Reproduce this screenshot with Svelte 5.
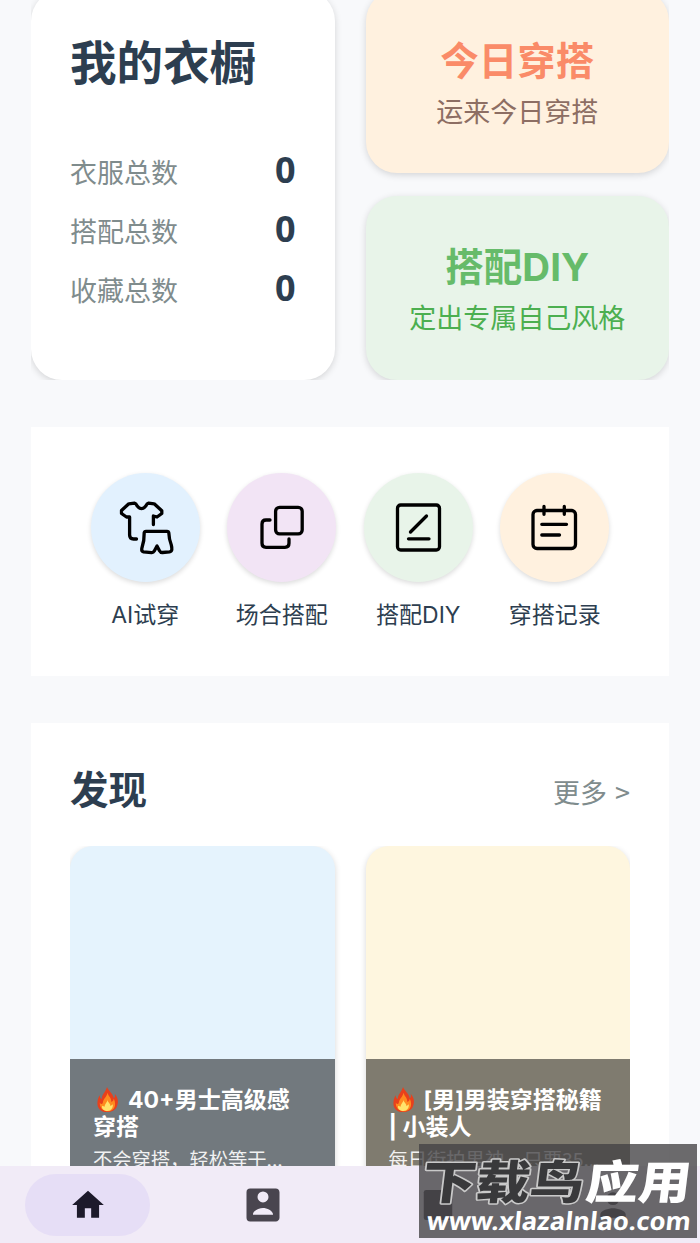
<script>
  const stats = [
    { label: '衣服总数', value: 0 },
    { label: '搭配总数', value: 0 },
    { label: '收藏总数', value: 0 }
  ];

  const actions = [
    { label: 'AI试穿', icon: 'tryon', tone: 'blue' },
    { label: '场合搭配', icon: 'scene', tone: 'purple' },
    { label: '搭配DIY', icon: 'diy', tone: 'green' },
    { label: '穿搭记录', icon: 'record', tone: 'orange' }
  ];

  const articles = [
    { lines: ['40+男士高级感', '穿搭'], desc: '不会穿搭，轻松等于...', tone: 'sky' },
    { lines: ['[男]男装穿搭秘籍', '| 小装人'], desc: '每日街拍男神，只要35...', tone: 'cream' }
  ];

  const tabs = ['home', 'contact', 'box', 'person'];
  let activeTab = $state('home');
</script>

<div class="app">
  <main>
    <section class="overview">
      <div class="card wardrobe">
        <h1>我的衣橱</h1>
        {#each stats as stat}
          <div class="stat">
            <span class="stat-label">{stat.label}</span>
            <span class="stat-value">{stat.value}</span>
          </div>
        {/each}
      </div>
      <div class="side">
        <div class="card promo today">
          <h2>今日穿搭</h2>
          <p>运来今日穿搭</p>
        </div>
        <div class="card promo diy">
          <h2>搭配DIY</h2>
          <p>定出专属自己风格</p>
        </div>
      </div>
    </section>

    <section class="actions">
      {#each actions as action}
        <div class="action">
          <div class="circle {action.tone}">
            <svg viewBox="0 0 109 109" fill="none" stroke="#000" stroke-width="3.3" stroke-linecap="round" stroke-linejoin="round">
              {#if action.icon === 'tryon'}
                <path d="M38.600 44V62Q38.600 66 42.500 66H45.500M38.600 44L35.500 44L30.500 40.500V37.500L37.800 30.800L43.500 30.200Q45.200 30.500 46 32.800Q50.500 38.500 55 32.800Q55.800 30.500 57.500 30.200L63.200 30.800L70.800 37.800V40.500L66 44L62.400 43V51.500" />
                <path d="M53.200 59.800Q53.400 58.300 55 58.300H76Q77.600 58.300 77.800 59.800Q78 66 80.300 72Q81 74.500 80.800 76.800Q80.500 78.600 78.500 78.900L71.500 79.500Q69.500 79.600 68.500 77.700L66 73L63.300 78Q62.300 79.800 60.500 79.600L52.500 78.800Q50.300 78.300 50.800 75.500Q53.500 67 53.200 59.800Z" />
              {:else if action.icon === 'scene'}
                <rect x="48.6" y="34.3" width="26.6" height="26.6" rx="4" />
                <path d="M43 47H39Q35 47 35 51V70.3Q35 74.3 39 74.3H58Q62 74.3 62 70.3V66" />
              {:else if action.icon === 'diy'}
                <rect x="33.5" y="32" width="42" height="45" rx="3.2" />
                <path d="M46.5 59L62.5 43M44.5 65.8H65" />
              {:else}
                <rect x="33" y="37.5" width="42.5" height="38" rx="4" />
                <path d="M44 33.5V41.3M64.3 33.5V41.3M41.8 51.3H66.5M41.8 62H59.5" />
              {/if}
            </svg>
          </div>
          <span>{action.label}</span>
        </div>
      {/each}
    </section>

    <section class="discover">
      <div class="discover-header">
        <h2>发现</h2>
        <span class="more">更多 &gt;</span>
      </div>
      <div class="articles">
        {#each articles as article}
          <div class="article {article.tone}">
            <div class="caption">
              <h3>
                <svg class="fire" viewBox="0 0 24 26">
                  <path fill="#e8401c" d="M11.5 0C13 4 18 7 18.6 12C20 11 20 8.500 19.500 7C23 11 24 16 21.500 21C19 25.500 14 26 11 26C5 26 1 22 1.500 16C1.700 12.500 3 10 4 8.500C4 10.500 4.500 12 6 12.500C6 8 9.500 6 11.500 0Z" />
                  <path fill="#ff8a1f" d="M12 6C13 10 16 11 16 15.500C18 15 18.500 13.500 18.500 12C21 17 20.500 23 15 25C9 26.500 3.500 22.500 4 16C5 18 6 18 7 17C7.500 12 11 11 12 6Z" />
                  <path fill="#ffe36b" d="M12 13C12 16.500 15.500 17 15 20L17.500 18C18 22 15.500 25 12 25C8 25 5.500 22.500 6.500 19.500L9 20.500C9 17.500 12 16 12 13Z" />
                </svg>{article.lines[0]}<br />{article.lines[1]}
              </h3>
              <p>{article.desc}</p>
            </div>
          </div>
        {/each}
      </div>
    </section>
  </main>

  <nav>
    {#each tabs as tab}
      <button class:active={activeTab === tab} aria-label={tab} onclick={() => (activeTab = tab)}>
        {#if tab === 'home'}
          <svg width="38" height="38" viewBox="0 0 24 24"><path d="M10 20v-6h4v6h5v-8h3L12 3 2 12h3v8z" /></svg>
        {:else if tab === 'contact'}
          <svg width="44" height="44" viewBox="0 0 24 24"><path d="M3 5v14a2 2 0 0 0 2 2h14c1.100 0 2-.9 2-2V5c0-1.100-.9-2-2-2H5a2 2 0 0 0-2 2zm12 2.600a3 3 0 1 1-6 0 3 3 0 0 1 6 0zM6.500 17.300c0-2.300 3.500-3.700 5.500-3.700s5.500 1.400 5.500 3.700z" /></svg>
        {:else if tab === 'box'}
          <svg width="38" height="38" viewBox="0 0 24 24"><rect x="3" y="2.500" width="18" height="19" rx="1.500" /></svg>
        {:else}
          <svg width="38" height="38" viewBox="0 0 24 24"><circle cx="12" cy="8" r="4" /><path d="M4 20v-2c0-2.700 5.300-4 8-4s8 1.300 8 4v2z" /></svg>
        {/if}
      </button>
    {/each}
  </nav>

  <div class="watermark">
    <svg viewBox="0 0 278 94">
      <g class="brand" transform="translate(7 0) skewX(-7)">
        <text class="brand-dark" x="1" y="55" textLength="162" lengthAdjust="spacingAndGlyphs">下载鸟</text>
        <text class="brand-light" x="165" y="55" textLength="105" lengthAdjust="spacingAndGlyphs">应用</text>
      </g>
      <g transform="translate(9 0) skewX(-6)">
        <text class="site" x="7" y="86" textLength="264" lengthAdjust="spacingAndGlyphs">www.xlazalnlao.com</text>
      </g>
    </svg>
  </div>
</div>

<style>
  :global(body) {
    background: #f8f9fb;
  }

  .app {
    position: relative;
    display: flex;
    flex-direction: column;
    height: 1243px;
    overflow: hidden;
    background: #f8f9fb;
    color: #2d3e50;
    font-family: 'Noto Sans CJK SC', 'Noto Sans', sans-serif;
  }

  h1, h2, h3, p {
    margin: 0;
  }

  main {
    flex: 1;
    min-height: 0;
    overflow: hidden;
    padding: 0 31px;
  }

  .overview {
    display: grid;
    grid-template-columns: 1fr 1fr;
    gap: 31px;
    height: 390px;
    margin-top: -10.500px;
    overflow: hidden;
  }

  .card {
    border-radius: 31px;
    box-shadow: 0 2px 7px rgba(0, 0, 0, 0.15);
  }

  .wardrobe {
    box-sizing: border-box;
    padding: 37px 39px 0;
    background: #fff;
  }

  .wardrobe h1 {
    height: 114px;
    font-size: 46.500px;
    line-height: 66px;
  }

  .stat {
    display: flex;
    align-items: center;
    justify-content: space-between;
    height: 59px;
  }

  .stat-label {
    padding-top: 2px;
    color: #7f8c8d;
    font-size: 27px;
  }

  .stat-value {
    font-family: 'Noto Sans', sans-serif;
    font-size: 36px;
    font-weight: 700;
    line-height: 50px;
  }

  .side {
    display: grid;
    grid-template-rows: 1fr 1fr;
    gap: 23px;
  }

  .promo {
    display: flex;
    flex-direction: column;
    align-items: center;
    justify-content: center;
    padding-top: 6px;
  }

  .promo h2 {
    font-family: 'Inter', 'Noto Sans CJK SC', sans-serif;
    font-size: 38.500px;
    line-height: 52px;
  }

  .promo p {
    font-size: 27px;
    line-height: 47px;
  }

  .today {
    background: #fff1df;
  }

  .today h2 {
    color: #fa8b68;
  }

  .today p {
    color: #8d6e63;
  }

  .diy {
    background: #e8f4e9;
  }

  .diy h2 {
    color: #66bb6a;
  }

  .diy p {
    color: #4caf50;
  }

  .actions {
    display: grid;
    grid-template-columns: repeat(4, 1fr);
    box-sizing: border-box;
    height: 249px;
    margin-top: 47.500px;
    padding: 46px 46px 0;
    background: #fff;
  }

  .action {
    display: flex;
    flex-direction: column;
    align-items: center;
    font-family: 'Inter', 'Noto Sans CJK SC', sans-serif;
    font-size: 23px;
    line-height: 34px;
  }

  .circle {
    width: 109px;
    height: 109px;
    margin-bottom: 15.500px;
    border-radius: 50%;
    box-shadow: 0 2px 5px rgba(0, 0, 0, 0.14);
  }

  .circle svg {
    display: block;
  }

  .blue {
    background: #e2f1fe;
  }

  .purple {
    background: #f2e4f5;
  }

  .green {
    background: #e8f4e9;
  }

  .orange {
    background: #fff1df;
  }

  .discover {
    margin-top: 47px;
    padding: 39px;
    background: #fff;
  }

  .discover-header {
    display: flex;
    align-items: center;
    justify-content: space-between;
    height: 84px;
  }

  .discover-header h2 {
    margin-top: -35px;
    font-size: 38.500px;
  }

  .more {
    margin-top: -25px;
    color: #7f8c8d;
    font-size: 27px;
    word-spacing: 2px;
  }

  .articles {
    display: grid;
    grid-template-columns: 1fr 1fr;
    gap: 31px;
    overflow: hidden;
  }

  .article {
    display: flex;
    flex-direction: column;
    justify-content: flex-end;
    height: 350px;
    border-radius: 23px;
    overflow: hidden;
    box-shadow: 0 2px 6px rgba(0, 0, 0, 0.16);
  }

  .sky {
    background: #e5f3fd;
  }

  .cream {
    background: #fef6df;
  }

  .caption {
    box-sizing: border-box;
    height: 137px;
    padding: 28px 23px 0;
    background: rgba(0, 0, 0, 0.5);
    color: #fff;
    white-space: nowrap;
  }

  .caption h3 {
    font-family: 'Inter', 'Noto Sans CJK SC', sans-serif;
    font-size: 23px;
    line-height: 27px;
  }

  .caption p {
    margin-top: 4px;
    font-size: 19.300px;
    line-height: 28px;
    opacity: 0.9;
  }

  .fire {
    width: 23px;
    height: 25px;
    margin: -5px 9px 0 3px;
    vertical-align: -4px;
  }

  nav {
    display: grid;
    grid-template-columns: repeat(4, 1fr);
    place-items: center;
    height: 77px;
    background: #f1ebf7;
  }

  nav button {
    display: grid;
    place-items: center;
    width: 125px;
    height: 62px;
    padding: 0;
    border: 0;
    border-radius: 31px;
    background: none;
    fill: #49454f;
  }

  nav button.active {
    background: #e6def6;
    fill: #1d1a2b;
  }

  .watermark {
    position: absolute;
    top: 1144px;
    left: 419px;
    width: 278px;
    height: 94px;
    background: rgba(67, 65, 68, 0.78);
  }

  .watermark svg {
    display: block;
  }

  .brand {
    font-size: 46px;
    font-weight: 900;
    stroke-linejoin: round;
    paint-order: stroke;
  }

  .brand-dark {
    fill: #39393b;
    stroke: #c9c9c9;
    stroke-width: 3;
  }

  .brand-light {
    fill: #fff;
  }

  .site {
    fill: #fff;
    font-family: 'Noto Sans', sans-serif;
    font-size: 25px;
    font-weight: 700;
  }
</style>
